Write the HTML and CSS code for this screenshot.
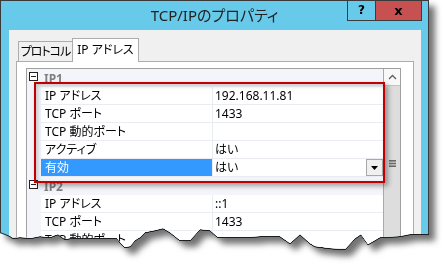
FILE: index.html
```html
<!DOCTYPE html>
<html lang="ja">
<head>
    <meta charset="UTF-8">
    <title>TCP/IPのプロパティ</title>
    <link rel="stylesheet" href="styles.css">
</head>
<body>
<div class="shot">
  <div class="window">
    <!-- title bar -->
    <div class="titlebar">
      <span></span>
      <div class="title">TCP/IPのプロパティ</div>
      <div class="caption-buttons">
        <div class="cap-btn help">?</div>
        <div class="cap-btn close">x</div>
      </div>
    </div>

    <div class="client">
      <div class="tabs">
        <div class="tab">プロトコル</div>
        <div class="tab active">IP アドレス</div>
      </div>

      <div class="panel">
        <div class="grid">
          <div class="grid-body">
            <div class="category"><span class="toggle"></span><span class="cat-name">IP1</span></div>
            <div class="row"><div class="label">IP アドレス</div><div class="value">192.168.11.81</div></div>
            <div class="row"><div class="label">TCP ポート</div><div class="value">1433</div></div>
            <div class="row"><div class="label">TCP 動的ポート</div><div class="value"></div></div>
            <div class="row"><div class="label">アクティブ</div><div class="value">はい</div></div>
            <div class="row selected">
              <div class="label">有効</div>
              <div class="value">はい
                <span class="drop"><svg width="7" height="4" viewBox="0 0 7 4"><polygon points="0,0 7,0 3.5,4" fill="#000"/></svg></span>
              </div>
            </div>

            <div class="category"><span class="toggle"></span><span class="cat-name">IP2</span></div>
            <div class="row"><div class="label">IP アドレス</div><div class="value">::1</div></div>
            <div class="row"><div class="label">TCP ポート</div><div class="value">1433</div></div>
            <div class="row"><div class="label">TCP 動的ポート</div><div class="value"></div></div>
          </div>

          <div class="scrollbar">
            <div class="scroll-up">
              <svg width="9" height="6" viewBox="0 0 9 6"><polyline points="1,5 4.5,1.5 8,5" fill="none" stroke="#606060" stroke-width="1.3"/></svg>
            </div>
            <div class="thumb">
              <svg width="7" height="7" viewBox="0 0 7 7"><rect y="0" width="7" height="1.6" fill="#6b6b6b"/><rect y="2.7" width="7" height="1.6" fill="#6b6b6b"/><rect y="5.4" width="7" height="1.6" fill="#6b6b6b"/></svg>
            </div>
          </div>

          <!-- red annotation frame -->
          <div class="highlight"></div>
        </div>
      </div>
    </div>
  </div>
</div>
</body>
</html>
```

FILE: styles.css
```css
/* Page */
body {
    margin: 0;
    background-color: #ffffff;
    font-family: "Noto Sans", "Noto Sans CJK JP", sans-serif;
    font-size: 12px;
    font-feature-settings: "palt";
    color: #000;
}

/* Screenshot wrapper with the torn paper shadow */
.shot {
    width: 445px;
    height: 272px;
    filter: drop-shadow(0 1px 0 #1e1e1e) drop-shadow(6px 6px 3px rgba(0, 0, 0, 0.55));
}

.window {
    width: 429px;
    height: 252px;
    box-sizing: border-box;
    border: 1px solid #3a3a3a;
    background-color: #67caea;
    display: flex;
    flex-direction: column;
    clip-path: polygon(0 0, 429px 0, 429px 234px, 420px 234px, 410px 234px, 400px 236px,
        380px 237px, 368px 244px, 361px 234px, 355px 238px, 345px 249px, 330px 248px,
        315px 246px, 310px 243px, 300px 234px, 290px 243px, 280px 236px, 260px 236px,
        245px 237px, 230px 237px, 218px 237px, 210px 230px, 200px 229px, 190px 240px,
        180px 240px, 170px 232px, 163px 228px, 155px 230px, 145px 232px, 140px 237px,
        135px 240px, 130px 246px, 125px 247px, 120px 242px, 117px 238px, 70px 238px,
        65px 239px, 58px 234px, 50px 237px, 40px 236px, 30px 238px, 20px 237px,
        13px 238px, 10px 236px, 5px 234px, 0 232px);
}

/* Title bar */
.titlebar {
    height: 29px;
    display: grid;
    grid-template-columns: 1fr auto 1fr;
    align-items: start;
}

.title {
    line-height: 29px;
    font-size: 15px;
    color: #222;
}

.caption-buttons {
    justify-self: end;
    display: flex;
    margin-right: 6px;
}

.cap-btn {
    height: 20px;
    box-sizing: border-box;
    border-left: 1px solid #3c3c3c;
    border-bottom: 1px solid #3c3c3c;
    text-align: center;
    font-family: "DejaVu Sans", sans-serif;
    font-weight: bold;
    line-height: 19px;
}

.cap-btn.help {
    width: 28px;
    font-size: 12px;
}

.cap-btn.close {
    width: 47px;
    border-right: 1px solid #3c3c3c;
    background-color: #c75050;
    font-size: 13px;
}

/* Dialog client area */
.client {
    flex: 1;
    min-height: 0;
    margin: 0 7px 0 8px;
    padding: 8px 7px 0;
    background-color: #f0f0f0;
    display: flex;
    flex-direction: column;
}

/* Tabs */
.tabs {
    display: flex;
    align-items: flex-end;
    height: 24px;
    padding-left: 2px;
    margin-bottom: -1px;
    position: relative;
    z-index: 1;
}

.tab {
    height: 20px;
    width: 54px;
    box-sizing: border-box;
    margin-bottom: 1px;
    border: 1px solid #acacac;
    border-right: none;
    border-bottom: none;
    background-color: #f0f0f0;
    line-height: 19px;
    text-align: center;
    white-space: nowrap;
    letter-spacing: -1px;
    color: #000;
}

.tab.active {
    height: 24px;
    width: 67px;
    margin-bottom: 0;
    border-right: 1px solid #acacac;
    background-color: #ffffff;
    line-height: 22px;
    letter-spacing: 0;
}

/* Tab page */
.panel {
    flex: 1;
    min-height: 0;
    background-color: #ffffff;
    border: 1px solid #acacac;
    padding: 6px 12px 0 9px;
    display: flex;
}

/* Property grid */
.grid {
    flex: 1;
    position: relative;
    border: 1px solid #a0a0a0;
    border-bottom: none;
    display: flex;
}

.grid-body {
    flex: 1;
    background-color: #f3f5fa;
}

.category {
    height: 18px;
    display: flex;
    align-items: flex-start;
}

.toggle {
    width: 9px;
    height: 9px;
    margin: 3px 0 0 2px;
    box-sizing: border-box;
    border: 1px solid #222;
    background: linear-gradient(#222, #222) center / 5px 1px no-repeat, #ffffff;
}

.cat-name {
    margin: 1px 0 0 6px;
    line-height: 17px;
    font-weight: bold;
    color: #808080;
}

.row {
    display: grid;
    grid-template-columns: 172px 1fr;
    padding-left: 14px;
    height: 18px;
    position: relative;
}

.row .label,
.row .value {
    height: 18px;
    box-sizing: border-box;
    line-height: 17px;
    background-color: #ffffff;
    border-bottom: 1px solid #e9edf2;
    white-space: nowrap;
}

.row .label {
    padding-left: 4px;
    border-right: 1px solid #e9edf2;
}

.row .value {
    padding-left: 2px;
    display: flex;
    justify-content: space-between;
    align-items: flex-start;
}

.row.selected .label {
    background-color: #3399ff;
    color: #ffffff;
}

.drop {
    width: 17px;
    height: 17px;
    box-sizing: border-box;
    border: 1px solid #a8a8a8;
    background-color: #f0f0f0;
    display: flex;
    align-items: center;
    justify-content: center;
}

/* Scrollbar */
.scrollbar {
    width: 16px;
    border-left: 1px solid #a9a9a9;
    background-color: #dddddd;
    display: flex;
    flex-direction: column;
}

.scroll-up {
    height: 16px;
    background-color: #f8f8f8;
    border-bottom: 1px solid #c4c4c4;
    display: flex;
    align-items: center;
    justify-content: center;
}

.thumb {
    flex: 1;
    display: flex;
    justify-content: center;
    padding-top: 74px;
}

/* Red annotation frame */
.highlight {
    position: absolute;
    left: 7px;
    top: 13px;
    width: 351px;
    height: 101px;
    box-sizing: border-box;
    border: 2px solid #c00000;
    box-shadow: 3px 3px 5px rgba(0, 0, 0, 0.35), inset 2px 2px 4px rgba(0, 0, 0, 0.2);
}
```
